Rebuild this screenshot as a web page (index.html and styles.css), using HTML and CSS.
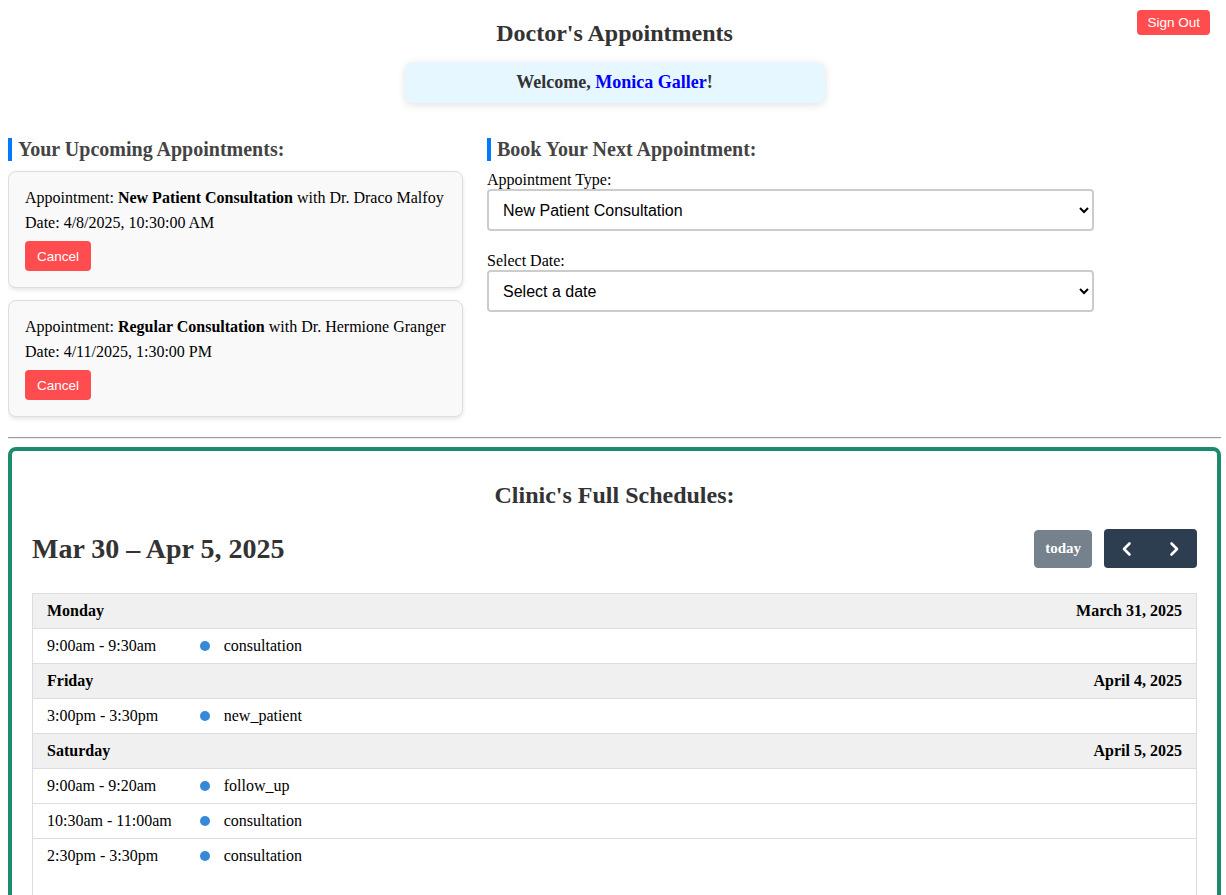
FILE: index.html
```html
<!DOCTYPE html>
<html lang="en">
<head>
<meta charset="utf-8">
<title>Doctor's Appointments</title>
<link rel="stylesheet" href="styles.css">
</head>
<body>
<header class="page-header">
  <div class="header-side"></div>
  <h1 class="page-title">Doctor's Appointments</h1>
  <div class="header-side header-right">
    <button class="btn-danger btn-signout">Sign Out</button>
  </div>
</header>

<div class="welcome">Welcome, <span class="welcome-name">Monica Galler</span>!</div>

<main class="columns">
  <section class="col-left">
    <h3 class="section-title">Your Upcoming Appointments:</h3>
    <div class="appt-card">
      <p class="appt-line">Appointment: <strong>New Patient Consultation</strong> with Dr. Draco Malfoy</p>
      <p class="appt-line">Date: 4/8/2025, 10:30:00 AM</p>
      <button class="btn-danger btn-cancel">Cancel</button>
    </div>
    <div class="appt-card">
      <p class="appt-line">Appointment: <strong>Regular Consultation</strong> with Dr. Hermione Granger</p>
      <p class="appt-line">Date: 4/11/2025, 1:30:00 PM</p>
      <button class="btn-danger btn-cancel">Cancel</button>
    </div>
  </section>

  <section class="col-right">
    <h3 class="section-title">Book Your Next Appointment:</h3>
    <div class="field">
      <label class="field-label" for="type">Appointment Type:</label>
      <select id="type" class="field-select">
        <option>New Patient Consultation</option>
        <option>Regular Consultation</option>
        <option>Follow Up</option>
      </select>
    </div>
    <div class="field">
      <label class="field-label" for="date">Select Date:</label>
      <select id="date" class="field-select">
        <option>Select a date</option>
      </select>
    </div>
  </section>
</main>

<hr class="divider">

<section class="schedule">
  <h2 class="schedule-title">Clinic's Full Schedules:</h2>
  <div class="toolbar">
    <h2 class="range-title">Mar 30 – Apr 5, 2025</h2>
    <div class="toolbar-buttons">
      <button class="fc-btn fc-today" disabled>today</button>
      <div class="fc-group">
        <button class="fc-nav" aria-label="prev">
          <svg width="16" height="16" viewBox="0 0 16 16"><polyline points="10.5,2.5 5,8 10.5,13.5" fill="none" stroke="#fff" stroke-width="2.6" stroke-linecap="round" stroke-linejoin="round"/></svg>
        </button>
        <button class="fc-nav" aria-label="next">
          <svg width="16" height="16" viewBox="0 0 16 16"><polyline points="5.5,2.5 11,8 5.5,13.5" fill="none" stroke="#fff" stroke-width="2.6" stroke-linecap="round" stroke-linejoin="round"/></svg>
        </button>
      </div>
    </div>
  </div>

  <div class="list-view">
    <table class="list-table">
      <tbody>
        <tr class="day-row"><th colspan="3"><div class="day-cushion"><span>Monday</span><span>March 31, 2025</span></div></th></tr>
        <tr class="event-row"><td class="ev-time">9:00am - 9:30am</td><td class="ev-graphic"><span class="ev-dot"></span></td><td class="ev-title">consultation</td></tr>
        <tr class="day-row"><th colspan="3"><div class="day-cushion"><span>Friday</span><span>April 4, 2025</span></div></th></tr>
        <tr class="event-row"><td class="ev-time">3:00pm - 3:30pm</td><td class="ev-graphic"><span class="ev-dot"></span></td><td class="ev-title">new_patient</td></tr>
        <tr class="day-row"><th colspan="3"><div class="day-cushion"><span>Saturday</span><span>April 5, 2025</span></div></th></tr>
        <tr class="event-row"><td class="ev-time">9:00am - 9:20am</td><td class="ev-graphic"><span class="ev-dot"></span></td><td class="ev-title">follow_up</td></tr>
        <tr class="event-row"><td class="ev-time">10:30am - 11:00am</td><td class="ev-graphic"><span class="ev-dot"></span></td><td class="ev-title">consultation</td></tr>
        <tr class="event-row"><td class="ev-time">2:30pm - 3:30pm</td><td class="ev-graphic"><span class="ev-dot"></span></td><td class="ev-title">consultation</td></tr>
      </tbody>
    </table>
  </div>
</section>
</body>
</html>
```

FILE: styles.css
```css
html, body {
  background: #fff;
}
body {
  margin: 8px 5px 8px 8px;
  font-family: "Liberation Serif", "Times New Roman", serif;
  font-size: 16px;
  color: #000;
}

/* Header */
.page-header {
  display: grid;
  grid-template-columns: 1fr auto 1fr;
  align-items: start;
}
.header-right {
  display: flex;
  justify-content: flex-end;
  padding-right: 11px;
  padding-top: 2px;
}
.page-title {
  margin: 0;
  padding-top: 11px;
  font-size: 24px;
  line-height: 28px;
  font-weight: bold;
  color: #333;
  text-align: center;
}
.btn-danger {
  background: #ff4d4f;
  color: #fff;
  border: none;
  border-radius: 4px;
  font-family: "Liberation Sans", Arial, sans-serif;
  font-size: 13.5px;
  cursor: pointer;
}
.btn-signout {
  height: 25px;
  padding: 0 10px;
}

.welcome {
  width: 420px;
  margin: 15px auto 0;
  box-sizing: border-box;
  padding: 10px;
  line-height: 21px;
  background: #e6f7ff;
  border-radius: 8px;
  box-shadow: 0 2px 8px rgba(0, 0, 0, 0.12);
  text-align: center;
  font-size: 18px;
  font-weight: bold;
  color: #333;
}
.welcome-name {
  color: #0000ff;
}

/* Columns */
.columns {
  display: flex;
  gap: 24px;
  margin-top: 35px;
  align-items: flex-start;
}
.col-left {
  width: 455px;
  display: flex;
  flex-direction: column;
  gap: 12px;
}
.col-right {
  width: 607px;
}
.section-title {
  margin: 0 0 -2px;
  font-size: 20px;
  line-height: 23px;
  font-weight: bold;
  color: #444;
  border-left: 4px solid #007bff;
  padding-left: 6px;
}
.col-right .section-title {
  margin-bottom: 10px;
}

.appt-card {
  background: #f9f9f9;
  border: 1px solid #ddd;
  border-radius: 8px;
  padding: 17px 16px 16px;
  box-shadow: 0 2px 4px rgba(0, 0, 0, 0.1);
}
.appt-line {
  margin: 0 0 7px;
  line-height: 18px;
}
.appt-line + .appt-line {
  margin-bottom: 9px;
}
.btn-cancel {
  display: block;
  height: 30px;
  padding: 0 12px;
}

.field {
  display: flex;
  flex-direction: column;
  margin-bottom: 21px;
}
.field-label {
  line-height: 18px;
}
.field-select {
  height: 42px;
  width: 100%;
  box-sizing: border-box;
  border: 2px solid #ccc;
  border-radius: 4px;
  padding: 0 10px;
  font-family: "Liberation Sans", Arial, sans-serif;
  font-size: 16px;
  color: #000;
  background: #fff;
}

.divider {
  margin: 20px 0 8px;
  height: 0;
  border: 0;
  border-top: 1px solid #9a9a9a;
  border-bottom: 1px solid #eee;
}

/* Schedule */
.schedule {
  border: 4px solid #1c8a6e;
  border-radius: 8px;
  padding: 20px;
}
.schedule-title {
  margin: 11px 0 21px;
  font-size: 24px;
  line-height: 26px;
  font-weight: bold;
  color: #333;
  text-align: center;
}
.toolbar {
  display: flex;
  justify-content: space-between;
  align-items: center;
  height: 39px;
  margin-bottom: 25px;
}
.range-title {
  margin: 0;
  font-size: 28px;
  line-height: 32px;
  font-weight: bold;
  color: #333;
}
.toolbar-buttons {
  display: flex;
  align-items: center;
  gap: 12px;
}
.fc-btn {
  background: #2c3e50;
  border: 1px solid #2c3e50;
  color: #fff;
  font-family: "Liberation Serif", "Times New Roman", serif;
  border-radius: 4px;
  cursor: pointer;
}
.fc-today {
  height: 38px;
  padding: 0 10px;
  font-size: 15px;
  font-weight: bold;
  opacity: 0.65;
}
.fc-group {
  display: flex;
  background: #2c3e50;
  border-radius: 4px;
  height: 39px;
}
.fc-nav {
  width: 46px;
  height: 39px;
  display: flex;
  align-items: center;
  justify-content: center;
  padding: 0;
  border: 0;
  background: transparent;
  cursor: pointer;
}
.fc-nav:last-child {
  width: 47px;
}

.list-view {
  border: 1px solid #ddd;
  height: 360px;
}
.list-table {
  width: 100%;
  border-collapse: collapse;
}
.day-row th {
  background: #f0f0f0;
  padding: 8px 14px;
  line-height: 18px;
  font-weight: bold;
  text-align: left;
  border-bottom: 1px solid #ddd;
}
.day-cushion {
  display: flex;
  justify-content: space-between;
}
.event-row td {
  padding: 8px 14px;
  line-height: 18px;
  border-bottom: 1px solid #ddd;
}
.event-row:last-child td {
  border-bottom: 0;
}
.ev-time {
  width: 1px;
  white-space: nowrap;
}
.ev-graphic {
  width: 1px;
  white-space: nowrap;
}
.event-row .ev-graphic {
  padding-right: 0;
}
.ev-dot {
  display: inline-block;
  width: 10px;
  height: 10px;
  border-radius: 50%;
  background: #3788d8;
  vertical-align: middle;
  position: relative;
  top: -1px;
}
```
